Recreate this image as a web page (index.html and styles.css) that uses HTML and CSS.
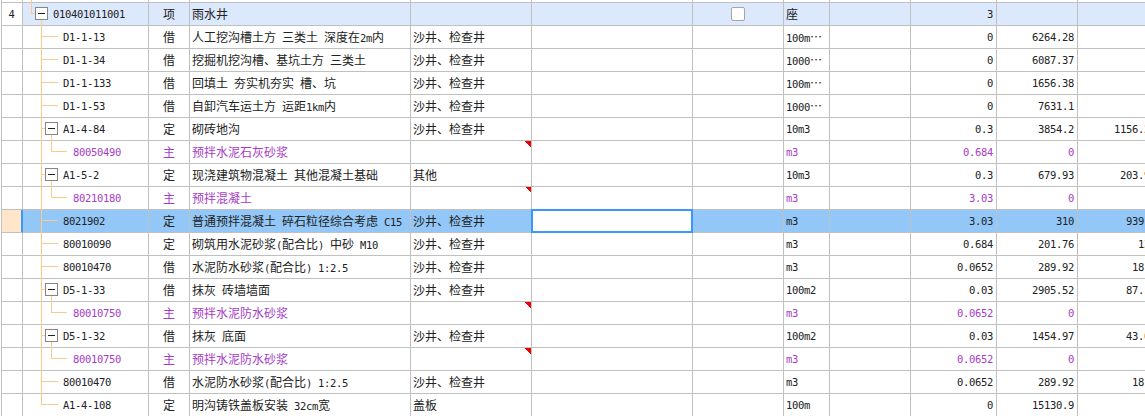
FILE: index.html
```html
<!DOCTYPE html>
<html lang="zh-CN">
<head>
<meta charset="utf-8">
<title>分部分项</title>
<link rel="stylesheet" href="styles.css">
</head>
<body>
<div class="sheet">
<table class="grid">
<colgroup>
<col class="c-no"><col class="c-code"><col class="c-type"><col class="c-name"><col class="c-feat"><col class="c-desc"><col class="c-check"><col class="c-unit"><col class="c-expr"><col class="c-qty"><col class="c-price"><col class="c-total">
</colgroup>
<tbody>
<tr class="sliver"><td></td><td></td><td></td><td></td><td></td><td></td><td></td><td></td><td></td><td></td><td></td><td></td></tr>
<tr class="root"><td class="no m">4</td><td class="code m lv0">010401011001</td><td class="type">项</td><td class="txt">雨水井</td><td></td><td></td><td class="chk"><span class="box"></span></td><td class="txt">座</td><td></td><td class="num m">3</td><td></td><td></td></tr>
<tr><td class="no"></td><td class="code m lv1">D1-1-13</td><td class="type">借</td><td class="txt">人工挖沟槽土方 三类土 深度在<span class="m">2m</span>内</td><td class="txt">沙井、检查井</td><td></td><td></td><td class="txt"><span class="m">100m</span>…</td><td></td><td class="num m">0</td><td class="num m">6264.28</td><td></td></tr>
<tr><td class="no"></td><td class="code m lv1">D1-1-34</td><td class="type">借</td><td class="txt">挖掘机挖沟槽、基坑土方 三类土</td><td class="txt">沙井、检查井</td><td></td><td></td><td class="txt"><span class="m">1000</span>…</td><td></td><td class="num m">0</td><td class="num m">6087.37</td><td></td></tr>
<tr><td class="no"></td><td class="code m lv1">D1-1-133</td><td class="type">借</td><td class="txt">回填土 夯实机夯实 槽、坑</td><td class="txt">沙井、检查井</td><td></td><td></td><td class="txt"><span class="m">100m</span>…</td><td></td><td class="num m">0</td><td class="num m">1656.38</td><td></td></tr>
<tr><td class="no"></td><td class="code m lv1">D1-1-53</td><td class="type">借</td><td class="txt">自卸汽车运土方 运距<span class="m">1km</span>内</td><td class="txt">沙井、检查井</td><td></td><td></td><td class="txt"><span class="m">1000</span>…</td><td></td><td class="num m">0</td><td class="num m">7631.1</td><td></td></tr>
<tr><td class="no"></td><td class="code m lv1">A1-4-84</td><td class="type">定</td><td class="txt">砌砖地沟</td><td class="txt">沙井、检查井</td><td></td><td></td><td class="txt m">10m3</td><td></td><td class="num m">0.3</td><td class="num m">3854.2</td><td class="num m">1156.26</td></tr>
<tr class="main"><td class="no"></td><td class="code m lv2">80050490</td><td class="type">主</td><td class="txt">预拌水泥石灰砂浆</td><td class="flag"></td><td></td><td></td><td class="txt m">m3</td><td></td><td class="num m">0.684</td><td class="num m">0</td><td></td></tr>
<tr><td class="no"></td><td class="code m lv1">A1-5-2</td><td class="type">定</td><td class="txt">现浇建筑物混凝土 其他混凝土基础</td><td class="txt">其他</td><td></td><td></td><td class="txt m">10m3</td><td></td><td class="num m">0.3</td><td class="num m">679.93</td><td class="num m">203.98</td></tr>
<tr class="main"><td class="no"></td><td class="code m lv2">80210180</td><td class="type">主</td><td class="txt">预拌混凝土</td><td class="flag"></td><td></td><td></td><td class="txt m">m3</td><td></td><td class="num m">3.03</td><td class="num m">0</td><td></td></tr>
<tr class="current"><td class="no"></td><td class="code m lv1">8021902</td><td class="type">定</td><td class="txt">普通预拌混凝土 碎石粒径综合考虑 <span class="m">C15</span></td><td class="txt">沙井、检查井</td><td class="editing"></td><td></td><td class="txt m">m3</td><td></td><td class="num m">3.03</td><td class="num m">310</td><td class="num m">939.3</td></tr>
<tr><td class="no"></td><td class="code m lv1">80010090</td><td class="type">定</td><td class="txt">砌筑用水泥砂浆<span class="m">(</span>配合比<span class="m">)</span> 中砂 <span class="m">M10</span></td><td class="txt">沙井、检查井</td><td></td><td></td><td class="txt m">m3</td><td></td><td class="num m">0.684</td><td class="num m">201.76</td><td class="num m">138</td></tr>
<tr><td class="no"></td><td class="code m lv1">80010470</td><td class="type">借</td><td class="txt">水泥防水砂浆<span class="m">(</span>配合比<span class="m">)</span> <span class="m">1:2.5</span></td><td class="txt">沙井、检查井</td><td></td><td></td><td class="txt m">m3</td><td></td><td class="num m">0.0652</td><td class="num m">289.92</td><td class="num m">18.9</td></tr>
<tr><td class="no"></td><td class="code m lv1">D5-1-33</td><td class="type">借</td><td class="txt">抹灰 砖墙墙面</td><td class="txt">沙井、检查井</td><td></td><td></td><td class="txt m">100m2</td><td></td><td class="num m">0.03</td><td class="num m">2905.52</td><td class="num m">87.17</td></tr>
<tr class="main"><td class="no"></td><td class="code m lv2">80010750</td><td class="type">主</td><td class="txt">预拌水泥防水砂浆</td><td class="flag"></td><td></td><td></td><td class="txt m">m3</td><td></td><td class="num m">0.0652</td><td class="num m">0</td><td></td></tr>
<tr><td class="no"></td><td class="code m lv1">D5-1-32</td><td class="type">借</td><td class="txt">抹灰 底面</td><td class="txt">沙井、检查井</td><td></td><td></td><td class="txt m">100m2</td><td></td><td class="num m">0.03</td><td class="num m">1454.97</td><td class="num m">43.65</td></tr>
<tr class="main"><td class="no"></td><td class="code m lv2">80010750</td><td class="type">主</td><td class="txt">预拌水泥防水砂浆</td><td class="flag"></td><td></td><td></td><td class="txt m">m3</td><td></td><td class="num m">0.0652</td><td class="num m">0</td><td></td></tr>
<tr><td class="no"></td><td class="code m lv1">80010470</td><td class="type">借</td><td class="txt">水泥防水砂浆<span class="m">(</span>配合比<span class="m">)</span> <span class="m">1:2.5</span></td><td class="txt">沙井、检查井</td><td></td><td></td><td class="txt m">m3</td><td></td><td class="num m">0.0652</td><td class="num m">289.92</td><td class="num m">18.9</td></tr>
<tr><td class="no"></td><td class="code m lv1">A1-4-108</td><td class="type">定</td><td class="txt">明沟铸铁盖板安装 <span class="m">32cm</span>宽</td><td class="txt">盖板</td><td></td><td></td><td class="txt m">100m</td><td></td><td class="num m">0</td><td class="num m">15130.9</td><td></td></tr>
</tbody>
</table>
<svg class="tree" width="148" height="416" viewBox="0 0 148 416" aria-hidden="true">
<path class="link" d="M31.5 0V13.5H35M41.5 19V404.5H58M41.5 36.5H58M41.5 59.5H58M41.5 82.5H58M41.5 105.5H58M41.5 220.5H58M41.5 243.5H58M41.5 266.5H58M41.5 381.5H58M41.5 128.5H45M41.5 174.5H45M41.5 289.5H45M41.5 335.5H45M51.5 134V151.5H67M51.5 180V197.5H67M51.5 295V312.5H67M51.5 341V358.5H67"/>
<rect class="toggle" x="35.5" y="7.5" width="12" height="12"/>
<rect class="toggle" x="45.5" y="122.5" width="12" height="12"/>
<rect class="toggle" x="45.5" y="168.5" width="12" height="12"/>
<rect class="toggle" x="45.5" y="283.5" width="12" height="12"/>
<rect class="toggle" x="45.5" y="329.5" width="12" height="12"/>
<path class="minus" d="M38 13.5H45M48 128.5H55M48 174.5H55M48 289.5H55M48 335.5H55"/>
</svg>
</div>
</body>
</html>
```

FILE: styles.css
```css
html, body {
  margin: 0;
  padding: 0;
  background: #fff;
}

.sheet {
  position: relative;
  width: 1145px;
  height: 416px;
  overflow: hidden;
}

.grid {
  margin-left: 1px;
  width: 1159px;
  table-layout: fixed;
  border-collapse: separate;
  border-spacing: 0;
  font: 12px/14px "Noto Sans CJK SC", sans-serif;
  word-spacing: 3.3px;
  color: #222;
}

.c-no { width: 22px; }
.c-code { width: 126px; }
.c-type { width: 41px; }
.c-name { width: 221px; }
.c-feat { width: 121px; }
.c-desc { width: 161px; }
.c-check { width: 91px; }
.c-unit { width: 46px; }
.c-expr { width: 81px; }
.c-qty { width: 86px; }
.c-price { width: 81px; }
.c-total { width: 82px; }

.grid td {
  box-sizing: border-box;
  height: 23px;
  padding: 0;
  border-right: 1px solid #c0c0c0;
  border-bottom: 1px solid #c0c0c0;
  white-space: nowrap;
  overflow: hidden;
  vertical-align: middle;
}

.grid td:first-child {
  border-left: 1px solid #c0c0c0;
}

.grid .sliver td {
  height: 3px;
  line-height: 0;
}

.m {
  font-family: "DejaVu Sans Mono", "Liberation Mono", monospace;
  font-size: 10.5px;
  letter-spacing: -0.32px;
  word-spacing: 0;
}

.grid .no {
  text-align: center;
  padding-right: 1px;
}

.grid .lv0 { padding-left: 30px; }
.grid .lv1 { padding-left: 40px; }
.grid .lv2 { padding-left: 50px; }

.grid .type { text-align: center; }
.grid .txt { padding-left: 2px; }
.grid .num { text-align: right; padding-right: 3px; }
.grid .chk { text-align: center; line-height: 0; }

.box {
  display: inline-block;
  box-sizing: border-box;
  width: 14px;
  height: 14px;
  background: #fff;
  border: 1px solid #a6a6a6;
  border-radius: 2px;
}

.root td { background: #dce9fc; }
.root .no { background: #fff; }

.main td { color: #a63cc6; }

.grid .flag { position: relative; }
.flag::after {
  content: "";
  position: absolute;
  top: 0;
  right: 0;
  width: 6px;
  height: 6px;
  background: linear-gradient(to top right, transparent 50%, #f00000 50%);
}

.current td { background: #92c7f7; }
.grid .current .no {
  background: #ffe6c8;
  border-right-color: #3e96fa;
  box-shadow: inset -1px 0 0 #3e96fa;
}

.grid .current .editing {
  position: relative;
  background: #fff;
  overflow: visible;
}
.editing::after {
  content: "";
  position: absolute;
  left: -1px;
  top: -1px;
  right: -1px;
  bottom: -1px;
  border: 2px solid #3e96fa;
}

.tree {
  position: absolute;
  left: 0;
  top: 0;
  pointer-events: none;
  shape-rendering: crispEdges;
}

.link { fill: none; stroke: #fdc98a; stroke-width: 1; }
.toggle { fill: #fff; stroke: #858585; stroke-width: 1; }
.minus { fill: none; stroke: #222; stroke-width: 1; }
```
